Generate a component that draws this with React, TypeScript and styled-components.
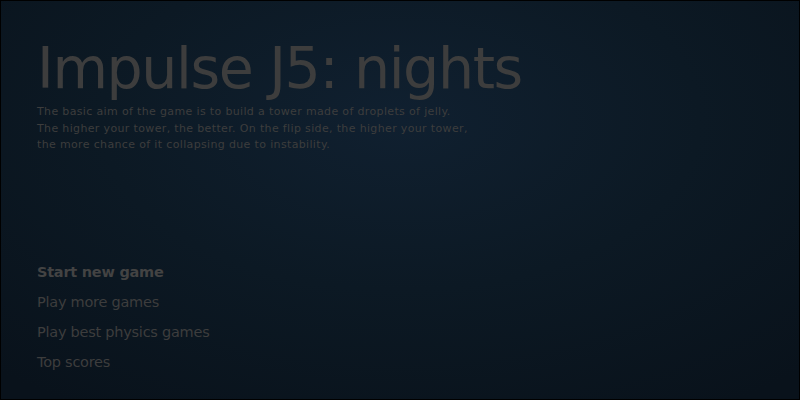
import React from 'react';
import styled, { createGlobalStyle } from 'styled-components';

const GlobalStyle = createGlobalStyle`
  html, body {
    margin: 0;
    padding: 0;
    background: #000;
  }
`;

const Screen = styled.div`
  box-sizing: border-box;
  width: 800px;
  height: 400px;
  border: 1px solid #000;
  background: radial-gradient(ellipse 75% 85% at 50% 30%, #102030 0%, #0c1924 50%, #09121b 100%);
  font-family: "DejaVu Sans", Verdana, sans-serif;
  color: #3d3d3d;
  padding: 33px 0 0 36px;
  display: flex;
  flex-direction: column;
`;

const Title = styled.h1`
  margin: 0;
  font-size: 57px;
  font-weight: normal;
  line-height: 68px;
  letter-spacing: -1.4px;
  color: #3d3d3d;
`;

const Intro = styled.p`
  margin: 2px 0 0;
  font-size: 11px;
  line-height: 16.5px;
  letter-spacing: 0.35px;
  color: #3d3d3d;
`;

const Menu = styled.nav`
  margin-top: 103px;
  display: flex;
  flex-direction: column;
`;

const MenuItem = styled.a<{ $active?: boolean }>`
  display: block;
  font-size: 14.5px;
  line-height: 30px;
  letter-spacing: -0.25px;
  font-weight: ${p => (p.$active ? 'bold' : 'normal')};
  color: ${p => (p.$active ? '#434343' : '#3d3d3d')};
  cursor: pointer;
`;

const items = ['Start new game', 'Play more games', 'Play best physics games', 'Top scores'];

export default function App() {
  return (
    <>
      <GlobalStyle />
      <Screen>
        <Title>Impulse J5: nights</Title>
        <Intro>
          The basic aim of the game is to build a tower made of droplets of jelly.
          <br />
          The higher your tower, the better. On the flip side, the higher your tower,
          <br />
          the more chance of it collapsing due to instability.
        </Intro>
        <Menu>
          {items.map((label, i) => (
            <MenuItem key={label} $active={i === 0}>
              {label}
            </MenuItem>
          ))}
        </Menu>
      </Screen>
    </>
  );
}
